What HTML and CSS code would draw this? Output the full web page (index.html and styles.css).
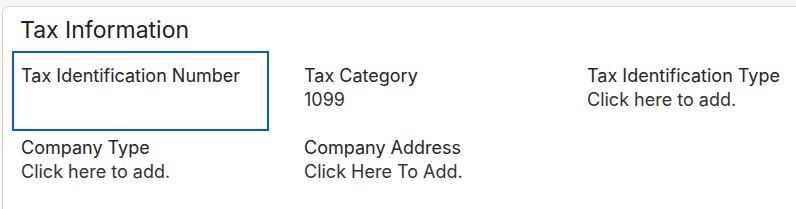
FILE: index.html
```html
<!DOCTYPE html>
<html lang="en">

<head>
    <meta charset="UTF-8">
    <meta name="viewport" content="width=device-width, initial-scale=1.0">
    <title>Tax Information</title>
    <link rel="stylesheet" href="styles.css">
</head>

<body>
    <div class="card">
        <h2>Tax Information</h2>

        <div class="field-grid">
            <div class="field focused">
                <div class="field-label">Tax Identification Number</div>
                <div class="field-value"></div>
            </div>
            <div class="field">
                <div class="field-label">Tax Category</div>
                <div class="field-value">1099</div>
            </div>
            <div class="field">
                <div class="field-label">Tax Identification Type</div>
                <div class="field-value">Click here to add.</div>
            </div>
            <div class="field">
                <div class="field-label">Company Type</div>
                <div class="field-value">Click here to add.</div>
            </div>
            <div class="field">
                <div class="field-label">Company Address</div>
                <div class="field-value">Click Here To Add.</div>
            </div>
        </div>
    </div>
</body>

</html>
```

FILE: styles.css
```css
body {
    font-family: Inter, 'Noto Sans', sans-serif;
    margin: 0;
    padding: 6px 0 0 2px;
    background-color: #f7f7f7;
    color: #333;
    overflow: hidden;
}

.card {
    width: 840px;
    min-height: 230px;
    background-color: #fff;
    border: 1px solid #d4d4d4;
    border-radius: 6px;
    padding: 9px 0 0 9px;
}

h2 {
    margin: 0 0 7px 8px;
    font-size: 23px;
    font-weight: 400;
    line-height: 28px;
    color: #222;
}

.field-grid {
    display: grid;
    grid-template-columns: 283px 283px 283px;
}

.field {
    height: 72px;
    box-sizing: border-box;
    border: 2px solid transparent;
    padding: 11px 7px 0;
    font-size: 18px;
    line-height: 24px;
}

.field.focused {
    height: 80px;
    width: 257px;
    margin-bottom: -8px;
    border-color: #0657e6;
}

.field-label {
    color: #262626;
}

.field-value {
    min-height: 24px;
    color: #333;
}
```
